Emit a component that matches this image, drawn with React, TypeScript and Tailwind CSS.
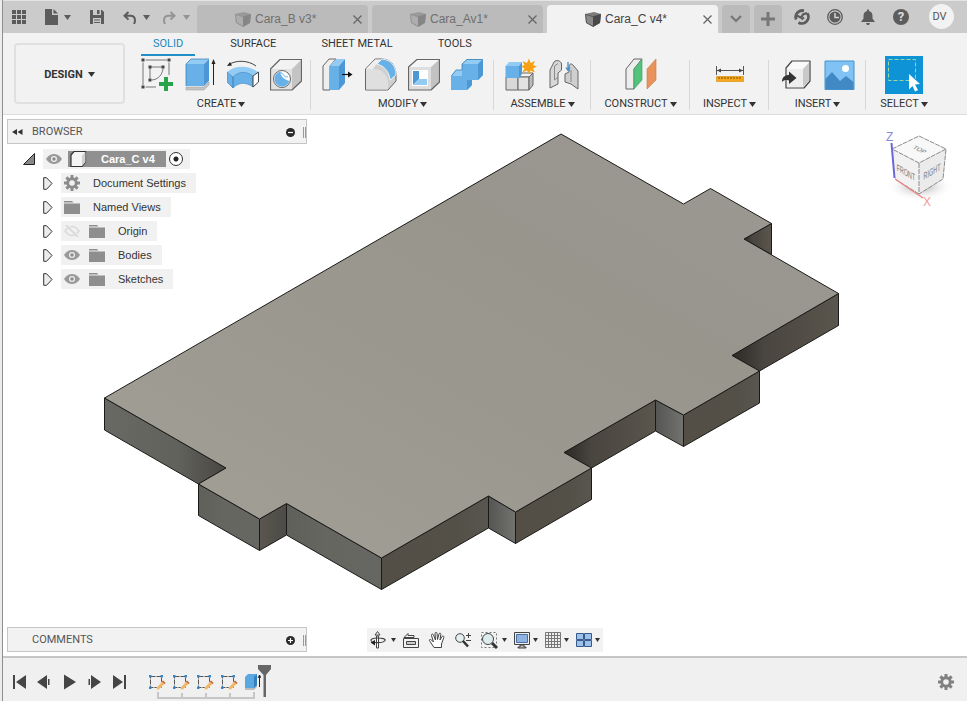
import React from "react";

type Children = { children?: React.ReactNode };

const INK = "#5c5c5c";

function Caret({ className = "text-[#333]" }: { className?: string }) {
  return (
    <svg width="7" height="5" viewBox="0 0 7 5" className={className} aria-hidden="true">
      <path d="M0 0h7L3.5 5z" fill="currentColor" />
    </svg>
  );
}

/* ---------- application bar ---------- */

function GridIcon() {
  const cells = [0, 5, 10];
  return (
    <svg width="14" height="14" viewBox="0 0 14 14" fill={INK}>
      {cells.map((y) => cells.map((x) => <rect key={`${x}-${y}`} x={x} y={y} width="4" height="4" />))}
    </svg>
  );
}

function FileIcon() {
  return (
    <svg width="13" height="16" viewBox="0 0 13 16" fill={INK}>
      <path d="M0 0h7v6h6v10H0z" />
      <path d="M8.500 0L13 4.500H8.500z" />
    </svg>
  );
}

function SaveIcon() {
  return (
    <svg width="14" height="14" viewBox="0 0 14 14">
      <path d="M0 0h12l2 2v12H0z" fill={INK} />
      <path d="M3 0h8v5H3zM3 8h8v6H3z" fill="#cbcbcb" />
      <path d="M7 0h2.500v4H7zM4 9.500h6v1H4zM4 12h6v1H4z" fill={INK} />
    </svg>
  );
}

function UndoIcon({ flip = false }: { flip?: boolean }) {
  return (
    <svg width="13" height="13" viewBox="0 0 13 13" className={flip ? "-scale-x-100 text-[#949494]" : "text-[#5c5c5c]"}>
      <path d="M5.500 1L1.500 4.800L5.500 8.600M2 4.800H7.500C10.500 4.800 12 7 12 9.500C12 11 11.500 12 11 13" fill="none" stroke="currentColor" strokeWidth="2" />
    </svg>
  );
}

function DocCube({ active = false }: { active?: boolean }) {
  const [top, left, right] = active ? ["#7c7c7c", "#8a8a8a", "#4a4a4a"] : ["#9a9a9a", "#adadad", "#868686"];
  const edge = active ? "#4a4a4a" : "#8a8a8a";
  return (
    <svg width="16" height="15" viewBox="0 0 16 15">
      <path d="M0 2L9 0L16 2L8 4.500z" fill={top} />
      <path d="M0 2L8 4.500V15L1 11z" fill={left} />
      <path d="M8 4.500L16 2L15 11L8 15z" fill={right} />
      <path d="M0.500 2.300L8 4.700L15.500 2.300L14.500 10.700L8 14.400L1.500 10.700z" fill="none" stroke={edge} strokeWidth="0.800" />
    </svg>
  );
}

function DocTab({ name, active = false }: { name: string; active?: boolean }) {
  return (
    <div
      className={`flex h-7 w-[171px] items-center justify-between rounded-t pr-[6px] pl-[38px] ${
        active ? "bg-[#f2f2f2] text-[#444]" : "bg-[#bbbbbb] text-[#707070]"
      }`}
    >
      <button className="flex items-center gap-1 font-['Liberation_Sans',Arial,sans-serif] text-[12px] leading-4 whitespace-nowrap">
        <DocCube active={active} />
        {name}
      </button>
      <button aria-label={`Close ${name}`}>
        <svg width="9" height="9" viewBox="0 0 9 9" stroke="#666" strokeWidth="1.300">
          <path d="M0.500 0.500L8.500 8.500M8.500 0.500L0.500 8.500" />
        </svg>
      </button>
    </div>
  );
}

function AppBar() {
  return (
    <header className="flex h-[33px] items-end border-t border-[#e4e4e4] bg-[#cbcbcb]">
      <div className="flex h-8 w-[194px] shrink-0 items-center gap-[19px] pl-[9px]">
        <button aria-label="Data panel"><GridIcon /></button>
        <button aria-label="File" className="flex items-center gap-[6px]"><FileIcon /><Caret className="text-[#5c5c5c]" /></button>
        <button aria-label="Save"><SaveIcon /></button>
        <div className="flex items-center gap-[13px]">
          <button aria-label="Undo" className="flex items-center gap-[7px]"><UndoIcon /><Caret className="text-[#5c5c5c]" /></button>
          <button aria-label="Redo" className="flex items-center gap-[7px]"><UndoIcon flip /><Caret className="text-[#949494]" /></button>
        </div>
      </div>
      <nav className="flex gap-1" aria-label="Documents">
        <DocTab name="Cara_B v3*" />
        <DocTab name="Cara_Av1*" />
        <DocTab name="Cara_C v4*" active />
        <button aria-label="All documents" className="flex h-7 w-7 items-center justify-center rounded-t bg-[#bbbbbb]">
          <svg width="12" height="8" viewBox="0 0 12 8" fill="none" stroke="#777" strokeWidth="2.200"><path d="M1 1L6 6L11 1" /></svg>
        </button>
        <button aria-label="New design" className="flex h-7 w-7 items-center justify-center rounded-t bg-[#bbbbbb]">
          <svg width="14" height="14" viewBox="0 0 14 14" stroke="#777" strokeWidth="3"><path d="M7 0V14M0 7H14" /></svg>
        </button>
      </nav>
      <div className="ml-3 flex h-8 items-center gap-[17px]">
        <button aria-label="Extensions">
          <svg width="16" height="16" viewBox="0 0 16 16" fill="none" stroke={INK}>
            <path d="M10 1.800A6.500 6.500 0 0 0 2.200 10.500M4.500 13.500A6.500 6.500 0 0 0 13.200 4.200" strokeWidth="2.800" />
            <path d="M2.500 6.500L7 8.500L9 5.500L13 4" strokeWidth="2.200" />
            <path d="M7.500 10.500L10 8.500" strokeWidth="2" />
          </svg>
        </button>
        <button aria-label="Job status">
          <svg width="16" height="16" viewBox="0 0 16 16">
            <circle cx="8" cy="8" r="7.300" fill="none" stroke={INK} strokeWidth="1.300" />
            <circle cx="8" cy="8" r="5.600" fill={INK} />
            <path d="M8 4V8.500H12" fill="none" stroke="#d4d4d4" strokeWidth="1.500" />
          </svg>
        </button>
        <button aria-label="Notifications">
          <svg width="16" height="16" viewBox="0 0 16 16" fill={INK}>
            <path d="M7 0.500h2v1.500C11.500 2.500 12.500 4.500 12.500 7V9.500L15 13H1L3.500 9.500V7C3.500 4.500 4.500 2.500 7 2zM6 14h4L9 16H7z" />
          </svg>
        </button>
        <button aria-label="Help" className="flex h-4 w-4 items-center justify-center rounded-full bg-[#5c5c5c] text-[13px] leading-4 font-bold text-[#dddddd]">?</button>
      </div>
      <button aria-label="Account" className="mb-1 ml-5 flex h-[25px] w-[25px] items-center justify-center rounded-full bg-[#f2f2f2] pt-[2px] pr-1 text-[11px] text-[#555]">DV</button>
    </header>
  );
}

/* ---------- ribbon icons ---------- */

function Ico({ children }: Children) {
  return (
    <svg width="32" height="34" viewBox="0 0 32 34" strokeLinejoin="round">
      {children}
    </svg>
  );
}

const OUT = "#666";
const BLUE = "#67b0e8";
const BLUE_TOP = "#92cbf3";
const BLUE_SIDE = "#4c98d4";

const SketchIcon = () => (
  <Ico>
    <path d="M4.500 2H26M28 4.500V17M2 4.500V27M4.500 29H15" fill="none" stroke="#777" />
    <path d="M9 20V9H21M22 11C21 17 17 21.500 11 22" fill="none" stroke="#777" />
    <g fill="#444"><path d="M0.500 0.500h3v3h-3zM26.500 0.500h3v3h-3zM0.500 27.500h3v3h-3zM7.500 7.500h3v3h-3zM20.500 7.500h3v3h-3zM7.500 20.500h3v3h-3z" /></g>
    <path d="M23 19h4v5h5v4h-5v5h-4v-5h-5v-4h5z" fill="#27a34b" />
  </Ico>
);

const ExtrudeIcon = () => (
  <Ico>
    <path d="M2 29H20L25 24V27L20 32H2z" fill="#c4c4c4" stroke="#9a9a9a" strokeWidth="0.500" />
    <path d="M2 6L7 1H25L20 6z" fill={BLUE_TOP} />
    <path d="M2 6H20V28H2z" fill={BLUE} />
    <path d="M20 6L25 1V23L20 28z" fill={BLUE_SIDE} />
    <path d="M2 28V6L7 1H25" fill="none" stroke="#3578ab" strokeWidth="0.700" />
    <path d="M29.500 27V4" stroke="#222" />
    <path d="M27.500 6L29.500 1L31.500 6z" fill="#222" />
  </Ico>
);

const RevolveIcon = () => (
  <Ico>
    <path d="M2 6.500C9 2 21 2 29 8" fill="none" stroke="#444" />
    <path d="M0 8L3 4L5 7.500z" fill="#222" />
    <path d="M0 14C8 7 22 7 31 14L26 18C19 13 12 13 6 19z" fill={BLUE_TOP} />
    <path d="M0 14L6 19V30L0 24zM6 19C12 13 19 13 26 18V29C19 24 12 24 6 30z" fill={BLUE} stroke="#3b82b8" strokeWidth="0.600" />
    <path d="M26 18L31.500 14V24L26 29z" fill="#fff" stroke="#444" />
  </Ico>
);

const HoleIcon = () => (
  <Ico>
    <path d="M0.500 11L10 1.500H31.500L22 11z" fill="#f2f2f2" />
    <path d="M22 11L31.500 1.500V23L22 32z" fill="#c4c4c4" />
    <path d="M0.500 11H22V32H0.500z" fill="#e2e2e2" />
    <path d="M0.500 11L10 1.500H31.500V23L22 32H0.500z" fill="none" stroke={OUT} strokeWidth="1.200" />
    <circle cx="12" cy="21" r="8.500" fill="#fafafa" stroke="#666" />
    <path d="M10 13.800C11 19 15 22 19.300 23A7.500 7.500 0 1 1 10 13.800z" fill={BLUE} />
    <path d="M9 14.500C12 14.500 13 16 14 17.500C15.500 20 17 18 18 19" fill="none" stroke={BLUE} />
  </Ico>
);

const PressPullIcon = () => (
  <Ico>
    <path d="M1 8L7 1H14L8 8V32H1z" fill="#eee" stroke={OUT} />
    <path d="M8 8L14 1H23L17 8z" fill={BLUE_TOP} />
    <path d="M8 8H17V32H8z" fill={BLUE} />
    <path d="M17 8L23 1V25L17 32z" fill={BLUE_SIDE} />
    <path d="M20 16.500H28" stroke="#111" strokeWidth="1.200" />
    <path d="M26 13.500L30.500 16.500L26 19.500z" fill="#111" />
  </Ico>
);

const FilletIcon = () => (
  <Ico>
    <path d="M0.500 11L10 1H18C26 2 31 8 31 17V23L23 32H0.500z" fill="#cfcfcf" stroke={OUT} />
    <path d="M1 11H8C17 11 23 17 23 26V31.500H1z" fill="#dfdfdf" />
    <path d="M1 11L10 1.500H16L10 8L8 11z" fill="#eee" />
    <path d="M12 6L17 1C26 2 31 8 31 17L25 22C24 13 19 8 12 6z" fill={BLUE} stroke="#fff" strokeWidth="0.800" />
  </Ico>
);

const ShellIcon = () => (
  <Ico>
    <path d="M0.500 9L9 1.500H31.500L23 9z" fill="#f5f5f5" />
    <path d="M23 9L31.500 1.500V24L23 32z" fill="#c2c2c2" />
    <path d="M0.500 9H23V32H0.500z" fill="#dedede" />
    <path d="M0.500 9L9 1.500H31.500V24L23 32H0.500z" fill="none" stroke={OUT} strokeWidth="1.200" />
    <path d="M4 12H20V28H4z" fill="#fff" />
    <path d="M5 13H11V21L5 27z" fill={BLUE_SIDE} />
    <path d="M5 27L11 21H19V27z" fill={BLUE_TOP} />
  </Ico>
);

const CombineIcon = () => (
  <Ico>
    <path d="M0 18L5 12H11V6L16 1H32V17L27 22H21V27L16 32H0z" fill={BLUE} />
    <path d="M11 6L16 1H32L27 6zM0 18L5 12H11V18z" fill={BLUE_TOP} />
    <path d="M27 6L32 1V17L27 22zM16 27V22H21V27L16 32z" fill={BLUE_SIDE} />
    <path d="M0.500 18L5 12H11V6L16 1.500H31.500" fill="none" stroke="#3a80b5" strokeWidth="0.800" />
  </Ico>
);

const AssembleIcon = () => (
  <Ico>
    <path d="M1 19H13V32H1z" fill="#d8d8d8" stroke={OUT} />
    <path d="M13 19L17 15H28L24 19z" fill="#f3f3f3" stroke={OUT} />
    <path d="M13 19H24V32H13z" fill="#e2e2e2" stroke={OUT} />
    <path d="M24 19L28 15V27L24 32z" fill="#bbb" stroke={OUT} />
    <path d="M0.500 8L4 4H17L14 8z" fill={BLUE_TOP} />
    <path d="M0.500 8H14V20H0.500z" fill={BLUE} />
    <path d="M14 8L17 4V16L14 20z" fill={BLUE_SIDE} />
    <path d="M24 0.500L25.500 5L30 3L28 7L32 8.500L28 10.500L30 14.500L25.500 12.500L24 16L22 12.500L17.500 14.500L19.500 10.500L16 8.500L19.500 7L17.500 3L22 5z" fill="#f7a012" />
  </Ico>
);

const JointIcon = () => (
  <Ico>
    <path d="M2 12L6 4C8 1.500 13 2.500 13.500 6V12L10 15V26L2 30z" fill="#d8d8d8" stroke={OUT} />
    <path d="M6.500 8V22L10 19M6.500 8L10 5.500" fill="none" stroke="#888" />
    <path d="M17 16L21 14V9C21 6 23 5 25 7L30 13V31L23 26L17 24z" fill="#cfcfcf" stroke={OUT} />
    <path d="M23 12V24" stroke="#888" />
    <path d="M20 4V12M18 9.500L20 12.500L22 9.500" fill="none" stroke="#3e8ecb" strokeWidth="1.300" />
  </Ico>
);

const ConstructIcon = () => (
  <Ico>
    <path d="M1 11L9 1H17L9 11V31H1z" fill="#ededed" stroke={OUT} />
    <path d="M9 11L17 1V22L9 31z" fill="#53c27d" stroke="#3a9a5e" strokeWidth="0.600" />
    <path d="M22 11L31 1V22L22 31z" fill="#e8935c" stroke="#c87845" strokeWidth="0.600" />
  </Ico>
);

const MeasureIcon = () => (
  <Ico>
    <path d="M2.500 8V17M29.500 8V17M3 12.500H29" stroke="#555" />
    <path d="M3 12.500L7 10.500V14.500zM29 12.500L25 10.500V14.500z" fill="#444" />
    <path d="M2.500 18.500H29.500V23.500H2.500z" fill="#f6a81c" stroke="#d98a00" strokeWidth="0.600" />
    <path d="M5 19v2M8 19v2M11 19v2M14 19v2M17 19v2M20 19v2M23 19v2M26 19v2" stroke="#7a5300" />
  </Ico>
);

const InsertIcon = () => (
  <Ico>
    <path d="M6 10L12 3H30V23L24 30H6z" fill="#fafafa" stroke="#444" strokeWidth="1.200" />
    <path d="M7 11H23V29H7z" fill="#eee" />
    <path d="M23 11L29 4.500V23L23 29z" fill="#c9c9c9" />
    <path d="M2 24C2 19 5 17 9 17V13.500L16.500 20L9 26V22.500C6 21.500 4 22 2 24z" fill="#333" />
  </Ico>
);

const ImageIcon = () => (
  <Ico>
    <path d="M2 3H31V31.500H2z" fill="#7fc2f3" stroke="#4393cf" />
    <path d="M2.500 21L9 14L17 23L23 18L30.500 24V31H2.500z" fill="#4189c4" />
    <circle cx="22.500" cy="10.500" r="3.500" fill="#fff" />
  </Ico>
);

function SelectIcon() {
  return (
    <svg width="38" height="38" viewBox="0 0 38 38">
      <path d="M0 0H38V38H0z" fill="#0d93d6" />
      <path d="M3.500 3.500H30.500V24.500H3.500z" fill="none" stroke="#9fd3a8" strokeDasharray="4 2" />
      <path d="M24 18L35 28L30 28.500L33 34L30 35.500L27.500 30L24 33.500z" fill="#fff" />
    </svg>
  );
}

type Group = { label: string; width: string; icons: React.ReactNode[] };

const GROUPS: Group[] = [
  { label: "CREATE", width: "w-[180px]", icons: [<SketchIcon />, <ExtrudeIcon />, <RevolveIcon />, <HoleIcon />] },
  { label: "MODIFY", width: "w-[183px]", icons: [<PressPullIcon />, <FilletIcon />, <ShellIcon />, <CombineIcon />] },
  { label: "ASSEMBLE", width: "w-[97px]", icons: [<AssembleIcon />, <JointIcon />] },
  { label: "CONSTRUCT", width: "w-[99px]", icons: [<ConstructIcon />] },
  { label: "INSPECT", width: "w-[79px]", icons: [<MeasureIcon />] },
  { label: "INSERT", width: "w-[97px]", icons: [<InsertIcon />, <ImageIcon />] },
  { label: "SELECT", width: "w-[76px]", icons: [<SelectIcon />] },
];

function Ribbon() {
  return (
    <section className="flex h-[82px] border-b border-[#dcdcdc] bg-[#f2f2f2] text-[11px] leading-4 text-[#333]">
      <button className="mt-[10px] ml-[11px] flex h-[61px] w-[111px] shrink-0 items-center justify-center gap-[5px] rounded border-2 border-[#e0e0e0] pt-[2px] font-bold">
        DESIGN <Caret />
      </button>
      <div className="ml-[6px] flex flex-col">
        <nav className="flex h-6 gap-[23px] pl-[10px]" aria-label="Workspace tabs">
          <button className="border-b-2 border-[#2090c8] px-3 text-[#1a87be]">SOLID</button>
          <button className="border-b-2 border-transparent px-3">SURFACE</button>
          <button className="border-b-2 border-transparent px-[10px]">SHEET METAL</button>
          <button className="border-b-2 border-transparent px-3">TOOLS</button>
        </nav>
        <div className="flex">
          {GROUPS.map((g, i) => (
            <div key={g.label} className="flex items-center">
              <div className={`flex flex-col items-center ${g.width}`}>
                <div className="flex h-[38px] items-center gap-[11px]">
                  {g.icons.map((icon, k) => (
                    <button key={k} aria-label={`${g.label} ${k + 1}`}>{icon}</button>
                  ))}
                </div>
                <button className="flex h-5 items-center gap-[2px]">
                  {g.label} <Caret />
                </button>
              </div>
              {i < GROUPS.length - 1 && <div className="-ml-px h-[50px] w-px bg-[#d8d8d8]" />}
            </div>
          ))}
        </div>
      </div>
    </section>
  );
}

/* ---------- browser tree ---------- */

function Eye() {
  return (
    <svg width="16" height="10" viewBox="0 0 16 10">
      <path d="M0 5C3 0.500 6 0 8 0S13 0.500 16 5C13 9.500 10 10 8 10S3 9.500 0 5z" fill="#9a9a9a" />
      <circle cx="8" cy="5" r="3" fill="#eee" />
      <circle cx="8" cy="5" r="1.700" fill="#8a8a8a" />
    </svg>
  );
}

function EyeOff() {
  return (
    <svg width="16" height="12" viewBox="0 0 16 12" fill="none" stroke="#dadada">
      <path d="M1 6C4 2 6 1.500 8 1.500S12 2 15 6C12 10 10 10.500 8 10.500S4 10 1 6z" strokeWidth="1.600" />
      <path d="M2 0L14 12" strokeWidth="2" />
      <path d="M4 0L15 11" stroke="#f1f1f1" />
    </svg>
  );
}

function Gear({ color = "#8c8c8c" }: { color?: string }) {
  return (
    <svg width="16" height="16" viewBox="0 0 16 16">
      <g fill={color}>
        {[0, 45, 90, 135].map((a) => (
          <path key={a} d="M6.500 0h3v16h-3z" transform={`rotate(${a} 8 8)`} />
        ))}
        <circle cx="8" cy="8" r="5.700" />
      </g>
      <circle cx="8" cy="8" r="2.800" fill="#f1f1f1" />
    </svg>
  );
}

function Folder() {
  return (
    <svg width="16" height="13" viewBox="0 0 16 13" fill="#8e8e8e">
      <path d="M0 0H8L9.500 1.500H0zM0 2.500H16V13H0z" />
    </svg>
  );
}

function Expander() {
  return (
    <button aria-label="Expand" className="w-[10px]">
      <svg width="10" height="13" viewBox="0 0 10 13"><path d="M0.700 0.700H3.500L9 6.500L3.500 12.300H0.700z" fill="#ececec" stroke="#333" /></svg>
    </button>
  );
}

const ROWS: { label: string; icons: React.ReactNode[] }[] = [
  { label: "Document Settings", icons: [<Gear />] },
  { label: "Named Views", icons: [<Folder />] },
  { label: "Origin", icons: [<EyeOff />, <Folder />] },
  { label: "Bodies", icons: [<Eye />, <Folder />] },
  { label: "Sketches", icons: [<Eye />, <Folder />] },
];

function PanelBar({ title, collapsible = false, sign }: { title: string; collapsible?: boolean; sign: "plus" | "minus" }) {
  return (
    <div className="flex h-[25px] w-[300px] items-center border border-[#c6c6c6] bg-[#f2f2f2] pt-px pl-1 text-[11px] text-[#555]">
      <div className="w-5">
        {collapsible && (
          <svg width="11" height="6" viewBox="0 0 11 6" fill="#333"><path d="M5 0V6L0 3zM10.500 0V6L5.500 3z" /></svg>
        )}
      </div>
      <span className="flex-1">{title}</span>
      <button aria-label={`Toggle ${title}`}>
        <svg width="9" height="9" viewBox="0 0 9 9">
          <circle cx="4.500" cy="4.500" r="4.500" fill="#2b2b2b" />
          <path d={sign === "plus" ? "M2 4.500H7M4.500 2V7" : "M2 4.500H7"} stroke="#fff" strokeWidth="1.200" />
        </svg>
      </button>
      <div className="ml-2 h-[11px] w-[3px] border-x border-[#999]" />
    </div>
  );
}

function BrowserTree() {
  return (
    <div className="mt-[5px] flex flex-col items-start gap-1 font-['Liberation_Sans',Arial,sans-serif] text-[11px] leading-5 text-[#333]">
      <div className="ml-4 flex items-center gap-2">
        <button aria-label="Collapse">
          <svg width="12" height="12" viewBox="0 0 12 12" className="block"><path d="M11.500 0.500V11.500H0.500z" fill="#888" stroke="#222" /></svg>
        </button>
        <div className="flex h-5 w-[147px] items-center bg-[#f1f1f1] pl-[3px]">
          <Eye />
          <div className="ml-[6px] flex h-4 w-[98px] items-center bg-[#909090] pl-[2px] font-bold text-white">
            <svg width="17" height="16" viewBox="0 0 17 16">
              <path d="M1 4L4 0.500H15.500V11L12 15.500H1z" fill="#f4f4f4" stroke="#333" strokeWidth="1.200" />
              <path d="M12 4.500L15.500 1V11L12 15z" fill="#cfcfcf" />
            </svg>
            <span className="ml-[14px]">Cara_C v4</span>
          </div>
          <input type="radio" defaultChecked aria-label="Activate component" className="m-0 ml-[3px] h-[14px] w-[14px] appearance-none rounded-full border border-[#333] bg-[radial-gradient(circle,#222_0_2px,#fff_3px)]" />
        </div>
      </div>
      {ROWS.map((r) => (
        <div key={r.label} className="ml-9 flex items-center gap-2">
          <Expander />
          <div className="flex h-5 items-center gap-[9px] bg-[#f1f1f1] pr-[10px] pl-[3px]">
            {r.icons.map((icon, k) => (
              <span key={k} className="flex w-4">{icon}</span>
            ))}
            <span className="ml-1">{r.label}</span>
          </div>
        </div>
      ))}
    </div>
  );
}

/* ---------- canvas ---------- */

function Model() {
  return (
    <svg className="absolute inset-0 h-full w-full" viewBox="3 115 964 541" role="img" aria-label="Cara_C body">
      <defs>
        <linearGradient id="top" x1="0" y1="1" x2="1" y2="0">
          <stop offset="0" stopColor="#a3a097" /><stop offset="0.400" stopColor="#9b9890" /><stop offset="0.650" stopColor="#98958d" /><stop offset="1" stopColor="#9b9993" />
        </linearGradient>
        <linearGradient id="leftDark"><stop offset="0" stopColor="#686964" /><stop offset="0.600" stopColor="#62625d" /><stop offset="1" stopColor="#484743" /></linearGradient>
        <linearGradient id="left"><stop offset="0" stopColor="#60605a" /><stop offset="0.400" stopColor="#656660" /><stop offset="1" stopColor="#666762" /></linearGradient>
        <linearGradient id="notch"><stop offset="0" stopColor="#555553" /><stop offset="1" stopColor="#72736f" /></linearGradient>
        <linearGradient id="right"><stop offset="0" stopColor="#544f46" /><stop offset="0.700" stopColor="#535047" /><stop offset="1" stopColor="#58564f" /></linearGradient>
        <linearGradient id="rightDark"><stop offset="0" stopColor="#2c2927" /><stop offset="0.300" stopColor="#49453f" /><stop offset="1" stopColor="#5a564d" /></linearGradient>
        <linearGradient id="short"><stop offset="0" stopColor="#5a564f" /><stop offset="1" stopColor="#4c4b47" /></linearGradient>
      </defs>
      <g stroke="#1b1a18" strokeWidth="1" strokeLinejoin="round">
        <path fill="url(#leftDark)" d="M104.500 398L226 468L198.500 484L104.500 430z" />
        <path fill="url(#left)" d="M198.500 484L259.500 519V550.500L198.500 515.500z" />
        <path fill="url(#short)" d="M259.500 519L286.500 503.500V535L259.500 550.500z" />
        <path fill="url(#left)" d="M286.500 503.500L381.500 558V589.500L286.500 535z" />
        <path fill="url(#right)" d="M381.500 558L488.500 496V528L381.500 589.500z" />
        <path fill="url(#notch)" d="M488.500 496L515.500 512V543.500L488.500 528z" />
        <path fill="url(#right)" d="M515.500 512L591.500 468V499.500L515.500 543.500z" />
        <path fill="url(#rightDark)" d="M564 452.500L655.500 400V431L591.500 468z" />
        <path fill="url(#notch)" d="M655.500 400L683.500 415V446.500L655.500 431z" />
        <path fill="url(#right)" d="M683.500 415L759.500 371V403L683.500 446.500z" />
        <path fill="url(#rightDark)" d="M732 355.500L838.500 293.500V325.500L759.500 371z" />
        <path fill="url(#rightDark)" d="M771.500 223.500V254.500L744 239z" />
        <path
          fill="url(#top)"
          d="M104.500 398L561 134L683.500 204L710.500 188.500L771.500 223.500L744 239L838.500 293.500L732 355.500L759.500 371L683.500 415L655.500 400L564 452.500L591.500 468L515.500 512L488.500 496L381.500 558L286.500 503.500L259.500 519L198.500 484L226 468z"
        />
      </g>
    </svg>
  );
}

function ViewCube() {
  return (
    <svg width="76" height="86" viewBox="880 125 76 86" className="mt-[6px] mr-[11px] font-['Liberation_Sans',Arial,sans-serif]" role="img" aria-label="View cube">
      <defs>
        <radialGradient id="shadow"><stop offset="0" stopColor="#aaa" /><stop offset="1" stopColor="#fff" stopOpacity="0" /></radialGradient>
      </defs>
      <ellipse cx="920" cy="187" rx="34" ry="14" fill="url(#shadow)" />
      <path d="M892 149L919 136L946 149L919 163z" fill="#f8f8f8" />
      <path d="M892 149L919 163V194L895 179z" fill="#f1f1f1" />
      <path d="M919 163L946 149L943 179L919 194z" fill="#ebebeb" />
      <path d="M892 149L919 136L946 149L919 163zM919 163V194L943 179L946 149M919 194L895 179" fill="none" stroke="#8b8b8b" strokeDasharray="5 1" />
      <path d="M891.500 143L894.500 178" stroke="#6a68d8" strokeWidth="2" />
      <path d="M895 179L923 198" stroke="#ec8a8a" strokeWidth="1.500" />
      <text x="886" y="141" fontSize="12" fill="#8a88dc">Z</text>
      <text x="923" y="206" fontSize="12" fill="#f09a9a">X</text>
      <g fontSize="8" fill="#777" textAnchor="middle">
        <text transform="matrix(0.750 0.350 -0.600 0.500 918 151)">TOP</text>
        <text transform="matrix(0.680 0.380 0.050 1.250 906 176)">FRONT</text>
        <text transform="matrix(0.680 -0.400 0 1.250 932 175)">RIGHT</text>
      </g>
    </svg>
  );
}

/* ---------- navigation bar ---------- */

function Nav({ label, caret = "", children }: Children & { label: string; caret?: string }) {
  return (
    <button aria-label={label} className={`flex items-center ${caret}`}>
      <svg width="18" height="18" viewBox="0 0 18 18" fill="none" stroke="#444">{children}</svg>
      {caret && <svg width="5" height="4" viewBox="0 0 5 4"><path d="M0 0H5L2.500 4z" fill="#333" /></svg>}
    </button>
  );
}

function NavBar() {
  return (
    <div className="flex h-6 items-center gap-[6px] bg-[#f2f2f2] pr-[3px] pl-[2px]">
      <Nav label="Orbit" caret="gap-1">
        <path d="M7.500 5H9.500V17H7.500zM8.500 0.500L11 4H6z" fill="#fff" />
        <path d="M3 10.500C0 8.500 4 7 8.500 7S17 8 16 9.500S12 12 6 11.500" strokeWidth="1.200" />
        <path d="M6 9V14.500L1.500 11.500z" fill="#222" stroke="none" />
      </Nav>
      <div className="flex gap-2">
        <Nav label="Look at">
          <path d="M1.500 7.500H16.500V16.500H1.500zM2 6.500L6 2.500V4.500H12V6.500z" />
          <path d="M4.500 10.500H13.500V13.500H4.500z" fill="#ccc" />
        </Nav>
        <Nav label="Pan">
          <path d="M6 16.500L2 10.500C0.500 8.500 2 8 3.500 9L5.500 11L3.500 4.500C3 3 5 2.500 5.500 4L7.500 9L7 2.500C7 1 9 1 9 2.500L9.500 8.500L11 3C11.500 1.500 13 2 12.800 3.500L12 9L14 5.500C15 4.500 16.200 5 15.800 6.500L13.500 13V16.500z" fill="#fff" />
        </Nav>
        <Nav label="Zoom">
          <circle cx="6" cy="7" r="4.300" fill="#e5f0f0" />
          <path d="M9 10L14 15.500" strokeWidth="2.600" stroke="#333" />
          <path d="M12 4.500H17M14.500 2V7M12 9.500H17" />
        </Nav>
        <Nav label="Fit" caret="gap-1">
          <path d="M1.500 1.500H16.500V16.500H1.500z" strokeDasharray="2 2" stroke="#777" />
          <circle cx="8" cy="8" r="5.500" fill="#ddecec" />
          <path d="M12 12L17 17" strokeWidth="3" stroke="#333" />
        </Nav>
      </div>
      <Nav label="Display settings" caret="gap-[2px]">
        <path d="M1.500 1.500H16.500V13.500H1.500z" fill="#eee" />
        <path d="M3.500 3.500H14.500V11.500H3.500z" fill="#8fb2e0" stroke="#4b6fa5" />
        <path d="M7 14h4v2h2v1H5v-1h2z" fill="#bbb" />
      </Nav>
      <Nav label="Grid and snaps" caret="gap-[2px]">
        <path d="M1.500 1.500H16.500V16.500H1.500zM4.500 1V17M7.500 1V17M10.500 1V17M13.500 1V17M1 4.500H17M1 7.500H17M1 10.500H17M1 13.500H17" stroke="#777" fill="#eee" />
      </Nav>
      <Nav label="Viewports" caret="gap-[2px]">
        <path d="M1.500 2.500H8.500V8.500H1.500zM9.500 2.500H16.500V8.500H9.500zM1.500 9.500H8.500V15.500H1.500zM9.500 9.500H16.500V15.500H9.500z" fill="#9ec0ea" stroke="#375a8c" />
      </Nav>
    </div>
  );
}

/* ---------- timeline ---------- */

const PLAYBACK = [
  { label: "Go to start", d: "M1 1H3V15H1zM14 1V15L4 8z" },
  { label: "Step back", d: "M10 1V15L0 8zM11 5H12.500V11H11z" },
  { label: "Play", d: "M2 0.500L14 8L2 15.500z" },
  { label: "Step forward", d: "M4 1V15L14 8zM1.500 5H3V11H1.500z" },
  { label: "Go to end", d: "M12 1H14V15H12zM1 1V15L11 8z" },
];

function TimelineSketch() {
  return (
    <svg width="18" height="17" viewBox="0 0 18 17">
      <path d="M2.500 2.500H13.500V13.500H2.500z" fill="none" stroke="#555" strokeDasharray="5 1" />
      <path d="M1 1h2.500v2.500H1zM12.500 1H15v2.500h-2.500zM1 12.500h2.500V15H1z" fill="#3b86c9" />
      <path d="M15 6.500L17.500 9L11 15.500L8.500 16L9 13z" fill="#f0b565" stroke="#f5f5f5" strokeWidth="0.400" />
      <path d="M15 6.500L17.500 9L16.500 10L14 7.500z" fill="#b5653f" />
    </svg>
  );
}

function Timeline() {
  return (
    <footer className="flex h-[45px] items-center border-t-2 border-[#c6c6c6] bg-[#f0f0f0] pt-[5px] pr-[13px] pl-[9px]">
      <div className="flex gap-[9px]">
        {PLAYBACK.map((p) => (
          <button key={p.label} aria-label={p.label}>
            <svg width="16" height="16" viewBox="0 0 16 16" fill="#454545"><path d={p.d} /></svg>
          </button>
        ))}
      </div>
      <div className="relative ml-5 flex h-[34px] items-center gap-[6px]">
        {[1, 2, 3, 4].map((n) => (
          <button key={n} aria-label={`Sketch${n}`}><TimelineSketch /></button>
        ))}
        <button aria-label="Extrude1">
          <svg width="17" height="18" viewBox="0 0 17 18">
            <path d="M1 14H10L13 11V14L10 17H1z" fill="#bbb" />
            <path d="M1 4L4 1H13V12L10 15H1z" fill="#5aa7e2" />
            <path d="M10 4L13 1V12L10 15z" fill="#347fbd" />
            <path d="M15.500 14V3M14 5L15.500 2L17 5" fill="none" stroke="#222" />
          </svg>
        </button>
        <svg className="absolute bottom-0 left-[9px]" width="98" height="7" viewBox="0 0 98 7" fill="none" stroke="#c6c6c6" strokeWidth="2">
          <path d="M1 0V6H97V0M25 1V6M49 1V6M73 1V6" />
        </svg>
        <svg className="absolute top-0 left-[110px]" width="13" height="32" viewBox="0 0 13 32" fill="#666">
          <path d="M0 0H13V4L8 10V32H5.500V10L0 4z" />
        </svg>
      </div>
      <button aria-label="Timeline settings" className="ml-auto"><Gear color="#808080" /></button>
    </footer>
  );
}

export default function App() {
  return (
    <div className="flex min-h-screen flex-col border-l-2 border-[#ececec] bg-white font-[Roboto,'Liberation_Sans',sans-serif]">
      <div className="flex flex-1 flex-col border-l border-[#8f8f8f]">
        <AppBar />
        <Ribbon />
        <main className="relative flex flex-1 flex-col justify-between">
          <Model />
          <div className="relative flex items-start justify-between pt-1 pl-1">
            <div>
              <PanelBar title="BROWSER" collapsible sign="minus" />
              <BrowserTree />
            </div>
            <ViewCube />
          </div>
          <div className="relative grid grid-cols-[1fr_auto_1fr] items-end p-1">
            <PanelBar title="COMMENTS" sign="plus" />
            <NavBar />
          </div>
        </main>
        <Timeline />
      </div>
    </div>
  );
}
